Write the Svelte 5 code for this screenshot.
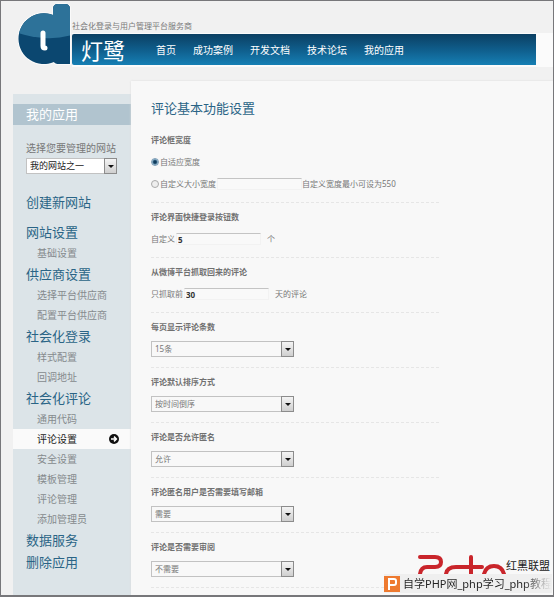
<script lang="ts">
  type MenuGroup = { title: string; items: string[] };
  type SelectField = { id: string; title: string; options: string[] };

  const nav = ["首页", "成功案例", "开发文档", "技术论坛", "我的应用"];

  const groups: MenuGroup[] = [
    { title: "网站设置", items: ["基础设置"] },
    { title: "供应商设置", items: ["选择平台供应商", "配置平台供应商"] },
    { title: "社会化登录", items: ["样式配置", "回调地址"] },
    { title: "社会化评论", items: ["通用代码", "评论设置", "安全设置", "模板管理", "评论管理", "添加管理员"] },
    { title: "数据服务", items: [] },
    { title: "删除应用", items: [] },
  ];

  const fields: SelectField[] = [
    { id: "per-page", title: "每页显示评论条数", options: ["15条"] },
    { id: "order", title: "评论默认排序方式", options: ["按时间倒序"] },
    { id: "anonymous", title: "评论是否允许匿名", options: ["允许"] },
    { id: "email", title: "评论匿名用户是否需要填写邮箱", options: ["需要"] },
    { id: "review", title: "评论是否需要审阅", options: ["不需要"] },
  ];

  let active = "评论设置";
  let widthMode = "auto";
  let customWidth = "";
  let buttonCount = "5";
  let fetchDays = "30";
</script>

<div class="page">
  <header>
    <svg class="logo" viewBox="0 0 54 64" aria-hidden="true">
      <defs>
        <clipPath id="mark">
          <path d="M35 12V6q0-5 5-5h7q5 0 5 5v55H41q-4 0-5-2A25.4 25.4 0 1 1 35 12Z" />
        </clipPath>
      </defs>
      <path d="M35 12V6q0-5 5-5h7q5 0 5 5v55H41q-4 0-5-2A25.4 25.4 0 1 1 35 12Z" fill="#0b4770" stroke="#fafafa" stroke-width="2" />
      <g clip-path="url(#mark)">
        <rect width="54" height="64" fill="#0b4770" />
        <path d="M0 0h54v32q-14 4-28 3T0 30Z" fill="#2d7299" />
      </g>
      <path d="M25 30v13q0 2 2 2" fill="none" stroke="#fff" stroke-width="5" stroke-linecap="round" stroke-linejoin="round" />
    </svg>
    <div class="brand">
      <p class="tagline">社会化登录与用户管理平台服务商</p>
      <div class="strip">
        <div class="bar">
          <span class="name">灯鹭</span>
          <nav>
            {#each nav as item}
              <a href="#top">{item}</a>
            {/each}
          </nav>
        </div>
      </div>
    </div>
  </header>

  <div class="body">
    <aside>
      <h2>我的应用</h2>
      <div class="site">
        <label for="site">选择您要管理的网站</label>
        <div class="select dark">
          <select id="site"><option>我的网站之一</option></select>
          <span class="arrow"></span>
        </div>
      </div>
      <a class="head create" href="#new">创建新网站</a>
      {#each groups as group}
        <a class="head" href="#group">{group.title}</a>
        {#each group.items as item}
          <a class="item" class:active={item === active} href="#item" on:click={() => (active = item)}>
            {item}
            {#if item === active}
              <svg viewBox="0 0 10 10" aria-hidden="true">
                <circle cx="5" cy="5" r="5" fill="#111" />
                <path d="M2 5h5M5 2.6 7.4 5 5 7.4" fill="none" stroke="#fff" stroke-width="1.5" />
              </svg>
            {/if}
          </a>
        {/each}
      {/each}
    </aside>

    <main>
      <h1>评论基本功能设置</h1>

      <section>
        <h3>评论框宽度</h3>
        <div class="row">
          <label><input type="radio" value="auto" bind:group={widthMode} />自适应宽度</label>
        </div>
        <div class="row second">
          <label><input type="radio" value="custom" bind:group={widthMode} />自定义大小宽度</label>
          <input class="text" type="text" aria-label="自定义大小宽度" bind:value={customWidth} />
          <span>自定义宽度最小可设为550</span>
        </div>
      </section>

      <section>
        <h3>评论界面快捷登录按钮数</h3>
        <div class="row">
          <label for="count">自定义</label>
          <input class="text" id="count" type="text" bind:value={buttonCount} />
          <span class="unit">个</span>
        </div>
      </section>

      <section>
        <h3>从微博平台抓取回来的评论</h3>
        <div class="row">
          <label for="days">只抓取前</label>
          <input class="text" id="days" type="text" bind:value={fetchDays} />
          <span class="unit">天的评论</span>
        </div>
      </section>

      {#each fields as field}
        <section>
          <h3><label for={field.id}>{field.title}</label></h3>
          <div class="select">
            <select id={field.id}>
              {#each field.options as option}
                <option>{option}</option>
              {/each}
            </select>
            <span class="arrow"></span>
          </div>
        </section>
      {/each}
    </main>
  </div>

  <div class="watermark">
    <div class="union">
      <svg viewBox="0 0 90 20" aria-hidden="true">
        <g fill="none" stroke="#c9252b" stroke-width="4" stroke-linecap="round">
          <path d="M4 3h15q6 0 6 5t-6 5h-8q-6 0-7 7" />
          <path d="M30 20q1-7 10-7h26M55 3v17" />
          <path d="M68 20q2-8 10-8t10 8" />
        </g>
      </svg>
      <span>红黑联盟</span>
    </div>
    <div class="source">
      <svg viewBox="0 0 16 16" aria-hidden="true">
        <rect width="16" height="16" fill="#ee7a30" />
        <path d="M5 14V3h5q2 0 2 2v2q0 2-2 2H5" fill="none" stroke="#fff" stroke-width="2" />
      </svg>
      <span>自学PHP网_php学习_php教程</span>
    </div>
  </div>
</div>

<style>
  :global(body) {
    background: #f0f0f0;
  }
  .page {
    position: relative;
    display: flex;
    flex-direction: column;
    box-sizing: border-box;
    min-height: 100vh;
    border: 1px solid #77777a;
    border-bottom-width: 2px;
    overflow: hidden;
    background: #f1f1f1;
    color: #777;
    font: 8px/14px "Noto Sans", "Noto Sans CJK SC", sans-serif;
  }
  h1, h2, h3, p {
    margin: 0;
    font-weight: 400;
  }
  a {
    color: inherit;
    text-decoration: none;
  }

  header {
    display: flex;
    padding: 2px 0 14px 17px;
  }
  .logo {
    flex: none;
    width: 54px;
    height: 64px;
  }
  .brand {
    flex: 1;
    padding-top: 16px;
  }
  .tagline {
    color: #7a7a7a;
  }
  .strip {
    padding: 1px 17px 2px 0;
    background: #fbfbfb;
  }
  .bar {
    display: flex;
    align-items: center;
    height: 31px;
    padding-left: 9px;
    border-radius: 2px 0 0 2px;
    background: linear-gradient(#0b3f62, #0f5d8b 50%, #167fb4);
    color: #fff;
  }
  .name {
    width: 75px;
    font-size: 22px;
    line-height: 30px;
  }
  nav {
    display: flex;
    gap: 17px;
    font-size: 10px;
  }

  .body {
    display: flex;
    flex: 1;
    padding-left: 12px;
  }
  aside {
    flex: none;
    display: flex;
    flex-direction: column;
    width: 118px;
    margin-top: 13px;
    padding-top: 10px;
    box-sizing: border-box;
    background: #dce4e8;
  }
  h2 {
    padding-left: 13px;
    background: #b1c4cf;
    color: #fff;
    font-size: 13px;
    line-height: 21px;
  }
  .site {
    padding: 16px 14px 17px 13px;
    font-size: 10px;
  }
  .site label {
    display: block;
    margin-bottom: 3px;
    white-space: nowrap;
  }
  .head {
    padding-left: 13px;
    color: #2a6486;
    font-size: 13px;
    line-height: 22px;
  }
  .create {
    margin-bottom: 8px;
  }
  .item {
    display: flex;
    align-items: center;
    justify-content: space-between;
    padding: 0 12px 0 24px;
    color: #858a8d;
    font-size: 10px;
    line-height: 20px;
  }
  .item.active {
    background: #fafafa;
    color: #222;
  }
  .item svg {
    width: 10px;
    height: 10px;
  }

  main {
    flex: 1;
    padding: 17px 20px 5px;
    background: #f8f8f8;
    box-shadow: 0 0 2px #ddd;
  }
  h1 {
    margin-bottom: 8px;
    color: #2a6486;
    font-size: 13px;
    line-height: 20px;
  }
  section {
    max-width: 288px;
    padding: 7px 0 10px;
    border-bottom: 1px dashed #e6e6e6;
  }
  h3 {
    margin-bottom: 7px;
    color: #707070;
    font-size: 8px;
    font-weight: 700;
  }
  .row {
    display: flex;
    align-items: center;
    height: 16px;
    white-space: nowrap;
  }
  .second {
    margin-top: 6px;
  }
  .row label {
    display: flex;
    align-items: center;
  }
  input[type="radio"] {
    appearance: none;
    width: 8px;
    height: 8px;
    margin: 0 1px 0 0;
    border: 1px solid #aaa;
    border-radius: 50%;
    background: #eee;
  }
  input[type="radio"]:checked {
    border-color: #7f9db5;
    background: radial-gradient(#0d3a5c 30%, #9fc4dc 70%);
  }
  .text {
    box-sizing: border-box;
    width: 85px;
    height: 12px;
    margin: 0 0 0 1px;
    padding: 0 1px;
    border: 1px solid #f2f2f2;
    border-top-color: #c4c4c4;
    background: #f9f9f9;
    color: #333;
    font: 700 8px/10px "Noto Sans", sans-serif;
  }
  .unit {
    margin-left: 6px;
  }

  .select {
    position: relative;
    max-width: 143px;
    height: 16px;
  }
  select {
    display: block;
    appearance: none;
    box-sizing: border-box;
    width: 100%;
    height: 16px;
    padding: 0 16px 0 3px;
    border: 1px solid #c2c2c2;
    border-radius: 0;
    background: #f8f8f8;
    color: #777;
    font: inherit;
    line-height: 14px;
  }
  .dark select {
    background: #fff;
    color: #222;
    font-size: 9px;
  }
  .arrow {
    position: absolute;
    top: 0;
    right: 0;
    display: grid;
    place-items: center;
    box-sizing: border-box;
    width: 13px;
    height: 16px;
    border: 1px solid #8c8c8c;
    background: linear-gradient(#f4f4f4, #cfcfcf);
    pointer-events: none;
  }
  .arrow::after {
    content: "";
    border: 3px solid transparent;
    border-top-color: #111;
    border-bottom: 0;
  }

  .watermark {
    position: absolute;
    right: 1px;
    bottom: 2px;
    width: 168px;
    color: #222;
    font-size: 11px;
    white-space: nowrap;
  }
  .union {
    display: flex;
    align-items: flex-end;
    height: 20px;
    padding-left: 32px;
  }
  .union svg {
    flex: none;
    width: 90px;
    height: 20px;
  }
  .union span {
    line-height: 16px;
  }
  .source {
    display: flex;
    align-items: center;
    gap: 3px;
    height: 19px;
    overflow: hidden;
    background: #efefef;
  }
  .source svg {
    flex: none;
    width: 16px;
    height: 16px;
  }
  .source span {
    background: linear-gradient(90deg, #222 120px, #eee 148px);
    background-clip: text;
    color: transparent;
  }
</style>
